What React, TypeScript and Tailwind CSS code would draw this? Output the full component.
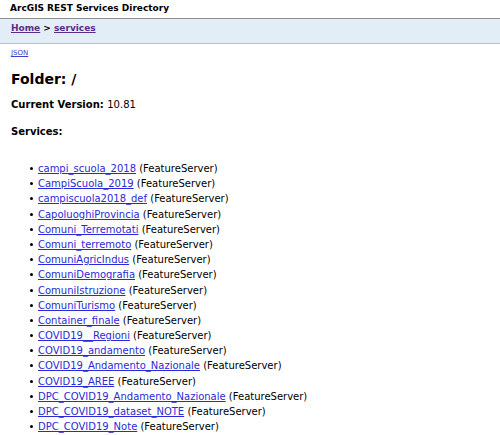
const services = [
  'campi_scuola_2018',
  'CampiScuola_2019',
  'campiscuola2018_def',
  'CapoluoghiProvincia',
  'Comuni_Terremotati',
  'Comuni_terremoto',
  'ComuniAgricIndus',
  'ComuniDemografia',
  'ComuniIstruzione',
  'ComuniTurismo',
  'Container_finale',
  'COVID19__Regioni',
  'COVID19_andamento',
  'COVID19_Andamento_Nazionale',
  'COVID19_AREE',
  'DPC_COVID19_Andamento_Nazionale',
  'DPC_COVID19_dataset_NOTE',
  'DPC_COVID19_Note',
];

export default function App() {
  return (
    <div className="min-h-[435px] bg-white text-black font-['DejaVu_Sans',Verdana,sans-serif] text-[10px] leading-none">
      {/* Title */}
      <div className="px-[10px] pt-[4px] h-[18px] font-bold text-[9px]">
        ArcGIS REST Services Directory
      </div>

      {/* Breadcrumb bar */}
      <div className="h-[26px] bg-[#e3edf7] border-t border-t-[#8e8e8e] border-b border-b-[#b9c1c9] px-[11px] pt-[4px]">
        <span className="font-bold text-[9px]">
          <a href="#" className="text-[#5a2d8c] underline">Home</a>
          <span> &gt; </span>
          <a href="#" className="text-[#5a2d8c] underline">services</a>
        </span>
      </div>

      <div className="px-[11px] pt-[3px]">
        <a href="#" className="text-[7px] text-[#3d3dd0] underline">JSON</a>
      </div>

      <h2 className="px-[11px] pt-[15px] text-[14px] font-bold">Folder: /</h2>

      <div className="px-[11px] pt-[14px]">
        <b>Current Version: </b>
        <span>10.81</span>
      </div>

      <div className="px-[11px] pt-[17px] font-bold">Services:</div>

      <ul className="pt-[24px] pl-[38px]">
        {services.map((s) => (
          <li key={s} className="relative h-[15.2px] leading-[15px]">
            <span className="absolute left-[-8px] top-[6px] w-[3px] h-[3px] rounded-full bg-black" />
            <a href="#" className="text-[#2a2ad6] underline">{s}</a> (FeatureServer)
          </li>
        ))}
      </ul>
    </div>
  );
}
